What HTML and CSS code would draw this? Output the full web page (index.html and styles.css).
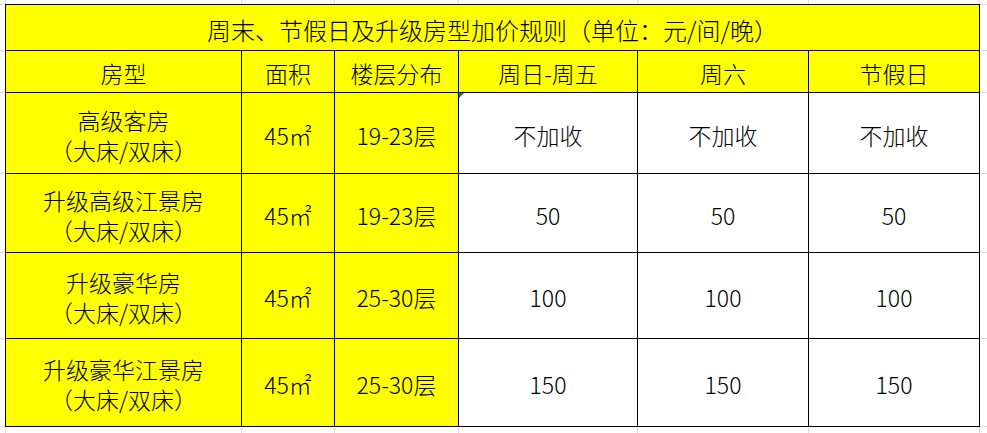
FILE: index.html
```html
<!DOCTYPE html>
<html lang="zh-CN">
<head>
<meta charset="utf-8">
<title>周末、节假日及升级房型加价规则</title>
<link rel="stylesheet" href="styles.css">
</head>
<body>
<div class="sheet">
  <div class="cell title">周末、节假日及升级房型加价规则（单位：元/间/晚）</div>

  <div class="cell">房型</div>
  <div class="cell">面积</div>
  <div class="cell">楼层分布</div>
  <div class="cell">周日-周五</div>
  <div class="cell">周六</div>
  <div class="cell">节假日</div>

  <div class="cell"><p class="two">高级客房<br>（大床/双床）</p></div>
  <div class="cell">45㎡</div>
  <div class="cell">19-23层</div>
  <div class="cell white flagged">不加收</div>
  <div class="cell white">不加收</div>
  <div class="cell white">不加收</div>

  <div class="cell"><p class="two">升级高级江景房<br>（大床/双床）</p></div>
  <div class="cell">45㎡</div>
  <div class="cell">19-23层</div>
  <div class="cell white">50</div>
  <div class="cell white">50</div>
  <div class="cell white">50</div>

  <div class="cell"><p class="two">升级豪华房<br>（大床/双床）</p></div>
  <div class="cell">45㎡</div>
  <div class="cell">25-30层</div>
  <div class="cell white">100</div>
  <div class="cell white">100</div>
  <div class="cell white">100</div>

  <div class="cell"><p class="two">升级豪华江景房<br>（大床/双床）</p></div>
  <div class="cell">45㎡</div>
  <div class="cell">25-30层</div>
  <div class="cell white">150</div>
  <div class="cell white">150</div>
  <div class="cell white">150</div>
</div>
</body>
</html>
```

FILE: styles.css
```css
html, body {
  margin: 0;
  height: 100%;
}

body {
  background-color: #ffffff;
  --grid: #dcdcdc;
  background-image:
    linear-gradient(var(--grid), var(--grid)),
    linear-gradient(var(--grid), var(--grid)),
    linear-gradient(var(--grid), var(--grid)),
    linear-gradient(var(--grid), var(--grid)),
    linear-gradient(var(--grid), var(--grid)),
    linear-gradient(var(--grid), var(--grid)),
    linear-gradient(var(--grid), var(--grid)),
    linear-gradient(var(--grid), var(--grid)),
    linear-gradient(var(--grid), var(--grid)),
    linear-gradient(var(--grid), var(--grid)),
    linear-gradient(var(--grid), var(--grid)),
    linear-gradient(var(--grid), var(--grid)),
    linear-gradient(var(--grid), var(--grid)),
    linear-gradient(var(--grid), var(--grid));
  background-repeat: no-repeat;
  background-size:
    100% 1px, 100% 1px, 100% 1px, 100% 1px, 100% 1px, 100% 1px, 100% 1px,
    1px 100%, 1px 100%, 1px 100%, 1px 100%, 1px 100%, 1px 100%, 1px 100%;
  background-position:
    0 4px, 0 50px, 0 92px, 0 173px, 0 252px, 0 338px, 0 426px,
    5px 0, 241px 0, 334px 0, 458px 0, 637px 0, 808px 0, 979px 0;
  padding: 4px 0 0 5px;
  box-sizing: border-box;
  font-family: "Noto Sans CJK SC", "Noto Sans", sans-serif;
  font-weight: 300;
  color: #000000;
}

.sheet {
  display: grid;
  grid-template-columns: 236px 93px 124px 179px 171px 171px;
  grid-template-rows: 46px 42px 81px 79px 86px 88px;
  width: max-content;
  border-left: 1px solid #000000;
  border-top: 1px solid #000000;
}

.cell {
  box-sizing: border-box;
  border-right: 1px solid #000000;
  border-bottom: 1px solid #000000;
  background: #ffff00;
  display: flex;
  flex-direction: column;
  align-items: center;
  justify-content: center;
  padding-top: 3px;
  font-size: 23px;
  line-height: 30px;
  white-space: nowrap;
  position: relative;
}

.two {
  margin: 0;
  text-align: center;
}

.title {
  grid-column: 1 / -1;
  font-size: 24px;
  padding-top: 5px;
}

.white {
  background: #ffffff;
}

.flagged::before {
  content: "";
  position: absolute;
  left: 0;
  top: 0;
  width: 0;
  height: 0;
  border-top: 5px solid #1f7f1f;
  border-right: 5px solid transparent;
}
```
